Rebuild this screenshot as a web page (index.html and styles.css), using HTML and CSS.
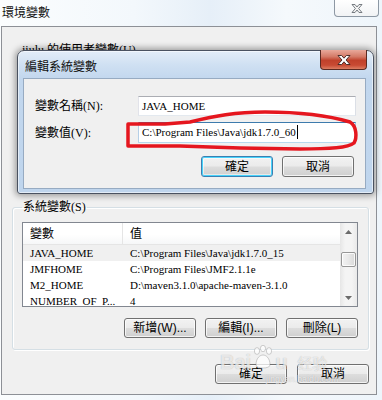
FILE: index.html
```html
<!DOCTYPE html>
<html>
<head>
<meta charset="utf-8">
<link rel="stylesheet" href="styles.css">
</head>
<body>
<div class="win">
  <div class="titlebar">
    <span class="title">環境變數</span>
    <span class="close-outer">
      <svg width="12" height="9" viewBox="0 0 12 9"><path d="M1 0.5 L4 0.5 L6 3 L8 0.5 L11 0.5 L7.6 4.5 L11 8.5 L8 8.5 L6 6 L4 8.5 L1 8.5 L4.4 4.5 Z" fill="#f4f4f4" stroke="#6a6f76" stroke-width="0.9" stroke-linejoin="round"/></svg>
    </span>
  </div>
  <div class="client">
    <div class="user-label">jiulu 的使用者變數(U)</div>
    <fieldset class="group">
      <legend>系統變數(S)</legend>
      <div class="list">
        <div class="list-main">
          <div class="lhead"><div class="c1">變數</div><div class="c2">值</div></div>
          <div class="row sel"><div class="c1">JAVA_HOME</div><div class="c2">C:\Program Files\Java\jdk1.7.0_15</div></div>
          <div class="row"><div class="c1">JMFHOME</div><div class="c2">C:\Program Files\JMF2.1.1e</div></div>
          <div class="row"><div class="c1">M2_HOME</div><div class="c2">D:\maven3.1.0\apache-maven-3.1.0</div></div>
          <div class="row"><div class="c1">NUMBER_OF_P...</div><div class="c2">4</div></div>
        </div>
        <div class="sb">
          <div class="sb-btn"><svg width="7" height="4" viewBox="0 0 7 4"><path d="M0 4 L3.5 0 L7 4 Z" fill="#6b6b6b"/></svg></div>
          <div class="sb-track"><div class="sb-thumb"></div></div>
          <div class="sb-btn"><svg width="7" height="4" viewBox="0 0 7 4"><path d="M0 0 L3.5 4 L7 0 Z" fill="#6b6b6b"/></svg></div>
        </div>
      </div>
      <div class="btnrow">
        <div class="btn">新增(W)...</div>
        <div class="btn">編輯(I)...</div>
        <div class="btn">刪除(L)</div>
      </div>
    </fieldset>
    <div class="btnrow bottom">
      <div class="btn">確定</div>
      <div class="btn">取消</div>
    </div>
  </div>
</div>

<div class="dialog">
  <div class="dtitle">
    <span class="dtitle-text">編輯系統變數</span>
    <span class="close-red">
      <svg width="14" height="10" viewBox="0 0 14 10"><path d="M1 0.5 L4.6 0.5 L7 3.2 L9.4 0.5 L13 0.5 L9 5 L13 9.5 L9.4 9.5 L7 6.8 L4.6 9.5 L1 9.5 L5 5 Z" fill="#ffffff" stroke="#3b2220" stroke-width="0.9" stroke-linejoin="round"/></svg>
    </span>
  </div>
  <div class="dclient">
    <div class="frow">
      <span class="flabel">變數名稱(N):</span>
      <div class="input">JAVA_HOME</div>
    </div>
    <div class="frow second">
      <span class="flabel">變數值(V):</span>
      <div class="input focus">C:\Program Files\Java\jdk1.7.0_60<span class="caret"></span></div>
    </div>
    <div class="btnrow dbtns">
      <div class="btn default">確定</div>
      <div class="btn">取消</div>
    </div>
  </div>
</div>

<svg class="redmark" width="382" height="400" viewBox="0 0 382 400">
  <path d="M128 146 L128 124 L165 124 L190 122 C215 116 235 112 265 112 C300 112 330 116 350 122 C357 126 357 138 354 143 C348 148 330 149 300 149 L240 148 L180 146 L150 146 Z" fill="none" stroke="#e5161e" stroke-width="3.5" stroke-linejoin="round"/>
</svg>

<div class="watermark">
  <div class="wm-top">
    <span class="wm-bai">Bai</span>
    <svg class="paw" width="22" height="26" viewBox="0 0 22 26">
      <g fill="rgba(255,255,255,0.75)" stroke="rgba(120,120,120,0.35)" stroke-width="1">
        <ellipse cx="5" cy="6" rx="2.6" ry="3.4"/>
        <ellipse cx="11" cy="3.5" rx="2.6" ry="3.2"/>
        <ellipse cx="17" cy="6" rx="2.6" ry="3.4"/>
        <path d="M4 20 C4 13 8 10 11 10 C14 10 18 13 18 20 C18 24 4 24 4 20 Z"/>
      </g>
    </svg>
    <span class="wm-bai">u</span>
    <span class="wm-cn">经验</span>
  </div>
  <div class="wm-url">jingyan.baidu.com</div>
</div>
</body>
</html>
```
FILE: styles.css
```css
* { box-sizing: border-box; }
html, body { margin: 0; padding: 0; }
body {
  width: 382px;
  height: 400px;
  overflow: hidden;
  position: relative;
  background: linear-gradient(90deg, #fbfdfe 0%, #f3f8fc 35%, #e6eff8 55%, #f5f9fc 75%, #eef5fb 100%);
  font-family: "Liberation Serif", "Noto Sans CJK TC", serif;
  font-size: 12px;
  color: #000;
}

/* outer window */
.win { display: flex; flex-direction: column; }
.titlebar {
  height: 26px;
  display: flex;
  justify-content: space-between;
  align-items: flex-start;
  padding: 0 3px 0 2px;
}
.title {
  font-family: "Noto Sans CJK TC", sans-serif;
  font-size: 12px;
  line-height: 14px;
  margin-top: 5px;
  color: #111;
}
.close-outer {
  width: 45px;
  height: 17px;
  border: 1px solid #8d98a4;
  border-top: none;
  border-radius: 0 0 4px 4px;
  background: linear-gradient(#ffffff, #f1f3f5);
  display: flex;
  align-items: center;
  justify-content: center;
}
.client {
  margin-left: 1px;
  width: 376px;
  height: 369px;
  border: 1px solid #8d9096;
  background: #f0f0f0;
  padding-top: 16px;
  display: flex;
  flex-direction: column;
}
.user-label {
  padding-left: 20px;
  line-height: 14px;
}
.group {
  margin: 143px 0 0 10px;
  width: 357px;
  padding: 8px 10px 11px 9px;
  border: 1px solid #d5dfe5;
  border-radius: 3px;
  box-shadow: inset 1px 1px 0 #fff, 1px 1px 0 #fff;
}
.group legend {
  padding: 0 1px;
  line-height: 14px;
}

/* list view */
.list {
  height: 85px;
  border: 1px solid #828790;
  background: #fff;
  display: flex;
  overflow: hidden;
}
.list-main { flex: 1; overflow: hidden; }
.lhead {
  display: flex;
  height: 22px;
  line-height: 22px;
  border-bottom: 1px solid #e5e5e5;
  background: linear-gradient(#ffffff 0%, #ffffff 55%, #f6f7f8 100%);
}
.lhead .c1, .row .c1 {
  width: 100px;
  flex: none;
  padding-left: 7px;
  white-space: nowrap;
  overflow: hidden;
}
.lhead .c1 { border-right: 1px solid #e5e5e5; }
.lhead .c2, .row .c2 { padding-left: 7px; white-space: nowrap; }
.row {
  display: flex;
  height: 16px;
  line-height: 16px;
  font-size: 11px;
}
.row.sel { background: #f0f0f0; }

.sb {
  width: 17px;
  flex: none;
  display: flex;
  flex-direction: column;
  background: linear-gradient(90deg, #e6e6e6, #f4f4f4 30%, #f4f4f4 70%, #e9e9e9);
}
.sb-btn {
  height: 17px;
  flex: none;
  display: flex;
  align-items: center;
  justify-content: center;
}
.sb-track { flex: 1; padding-top: 12px; }
.sb-thumb {
  height: 15px;
  margin: 0 1px;
  border: 1px solid #979797;
  border-radius: 2px;
  background: linear-gradient(90deg, #f3f3f3, #e8e8e8 50%, #d9d9d9);
  box-shadow: inset 0 0 0 1px rgba(255,255,255,.8);
}

/* buttons */
.btnrow {
  display: flex;
  justify-content: flex-end;
  gap: 9px;
  margin-top: 11px;
}
.btnrow.bottom {
  margin-top: 14px;
  margin-right: 7px;
  gap: 10px;
}
.btn {
  width: 72px;
  height: 20px;
  border: 1px solid #707070;
  border-radius: 3px;
  background: linear-gradient(#f2f2f2 0%, #ebebeb 48%, #dddddd 52%, #cfcfcf 100%);
  box-shadow: inset 0 0 0 1px rgba(255,255,255,.75);
  font-family: "Liberation Sans", "Noto Sans CJK TC", sans-serif;
  font-size: 12px;
  line-height: 14px;
  display: flex;
  align-items: center;
  justify-content: center;
  color: #000;
}
.btn.default {
  border-color: #3c7fb1;
  box-shadow: inset 0 0 0 1px #48d3fb, inset 0 0 0 2px rgba(255,255,255,.5);
}

/* dialog */
.dialog {
  position: absolute;
  left: 17px;
  top: 50px;
  width: 357px;
  height: 144px;
  border: 1px solid #4a5260;
  border-radius: 7px 7px 3px 3px;
  background: linear-gradient(#e3edf8 0px, #cfe0f2 14px, #c2d7ee 28px, #bfd5ed 100%);
  box-shadow: 0 0 6px 2px rgba(0,0,0,.35), inset 0 0 0 1px rgba(255,255,255,.55);
  padding: 0 7px 4px 5px;
  display: flex;
  flex-direction: column;
}
.dtitle {
  height: 27px;
  flex: none;
  display: flex;
  align-items: flex-start;
  justify-content: space-between;
}
.dtitle-text {
  font-family: "Noto Sans CJK TC", sans-serif;
  font-size: 12px;
  line-height: 14px;
  margin: 8px 0 0 2px;
  color: #111;
}
.close-red {
  width: 47px;
  height: 20px;
  margin-right: -1px;
  margin-top: -1px;
  border: 1px solid #5a2a22;
  border-top: none;
  border-radius: 0 0 4px 4px;
  background: linear-gradient(#e9a99b 0%, #d47a67 35%, #c0412b 55%, #c84a33 80%, #dc7d62 100%);
  display: flex;
  align-items: center;
  justify-content: center;
}
.dclient {
  flex: 1;
  background: #f0f0f0;
  border: 1px solid #97abc2;
  padding: 17px 9px 0 11px;
}
.frow {
  display: flex;
  align-items: center;
  justify-content: space-between;
  height: 20px;
}
.frow.second { margin-top: 6px; height: 21px; }
.flabel { line-height: 14px; }
.input {
  width: 218px;
  height: 100%;
  border: 1px solid #abadb3;
  border-color: #abadb3 #dbdfe6 #e3e9ef #e2e3ea;
  background: #fff;
  padding-left: 3px;
  font-size: 11px;
  line-height: 18px;
  white-space: nowrap;
  overflow: hidden;
}
.input.focus {
  border-color: #3d7bad #a4c9e3 #b7d9ed #b5cfe7;
  line-height: 19px;
}
.caret {
  display: inline-block;
  width: 1px;
  height: 14px;
  background: #000;
  vertical-align: -3px;
  margin-left: 1px;
}
.dbtns { margin-top: 13px; margin-right: 2px; }
.dbtns .btn { height: 21px; }

/* annotation and watermark */
.redmark {
  position: absolute;
  left: 0;
  top: 0;
  pointer-events: none;
}
.watermark {
  position: absolute;
  left: 220px;
  top: 343px;
  pointer-events: none;
}
.wm-top {
  display: flex;
  align-items: flex-end;
  height: 30px;
}
.wm-bai {
  font-family: "Liberation Sans", sans-serif;
  font-weight: bold;
  font-size: 20px;
  line-height: 22px;
  color: rgba(255,255,255,.7);
  text-shadow: 0 0 1px rgba(90,90,90,.45);
}
.paw { margin: 0 1px 2px; }
.wm-cn {
  margin-left: 10px;
  font-family: "Noto Sans CJK SC", sans-serif;
  font-size: 15px;
  line-height: 20px;
  color: rgba(255,255,255,.7);
  text-shadow: 0 0 1px rgba(90,90,90,.45);
}
.wm-url {
  margin: 1px 0 0 46px;
  font-family: "Liberation Sans", sans-serif;
  font-size: 9px;
  line-height: 10px;
  color: rgba(255,255,255,.7);
  text-shadow: 0 0 1px rgba(90,90,90,.4);
}
```
